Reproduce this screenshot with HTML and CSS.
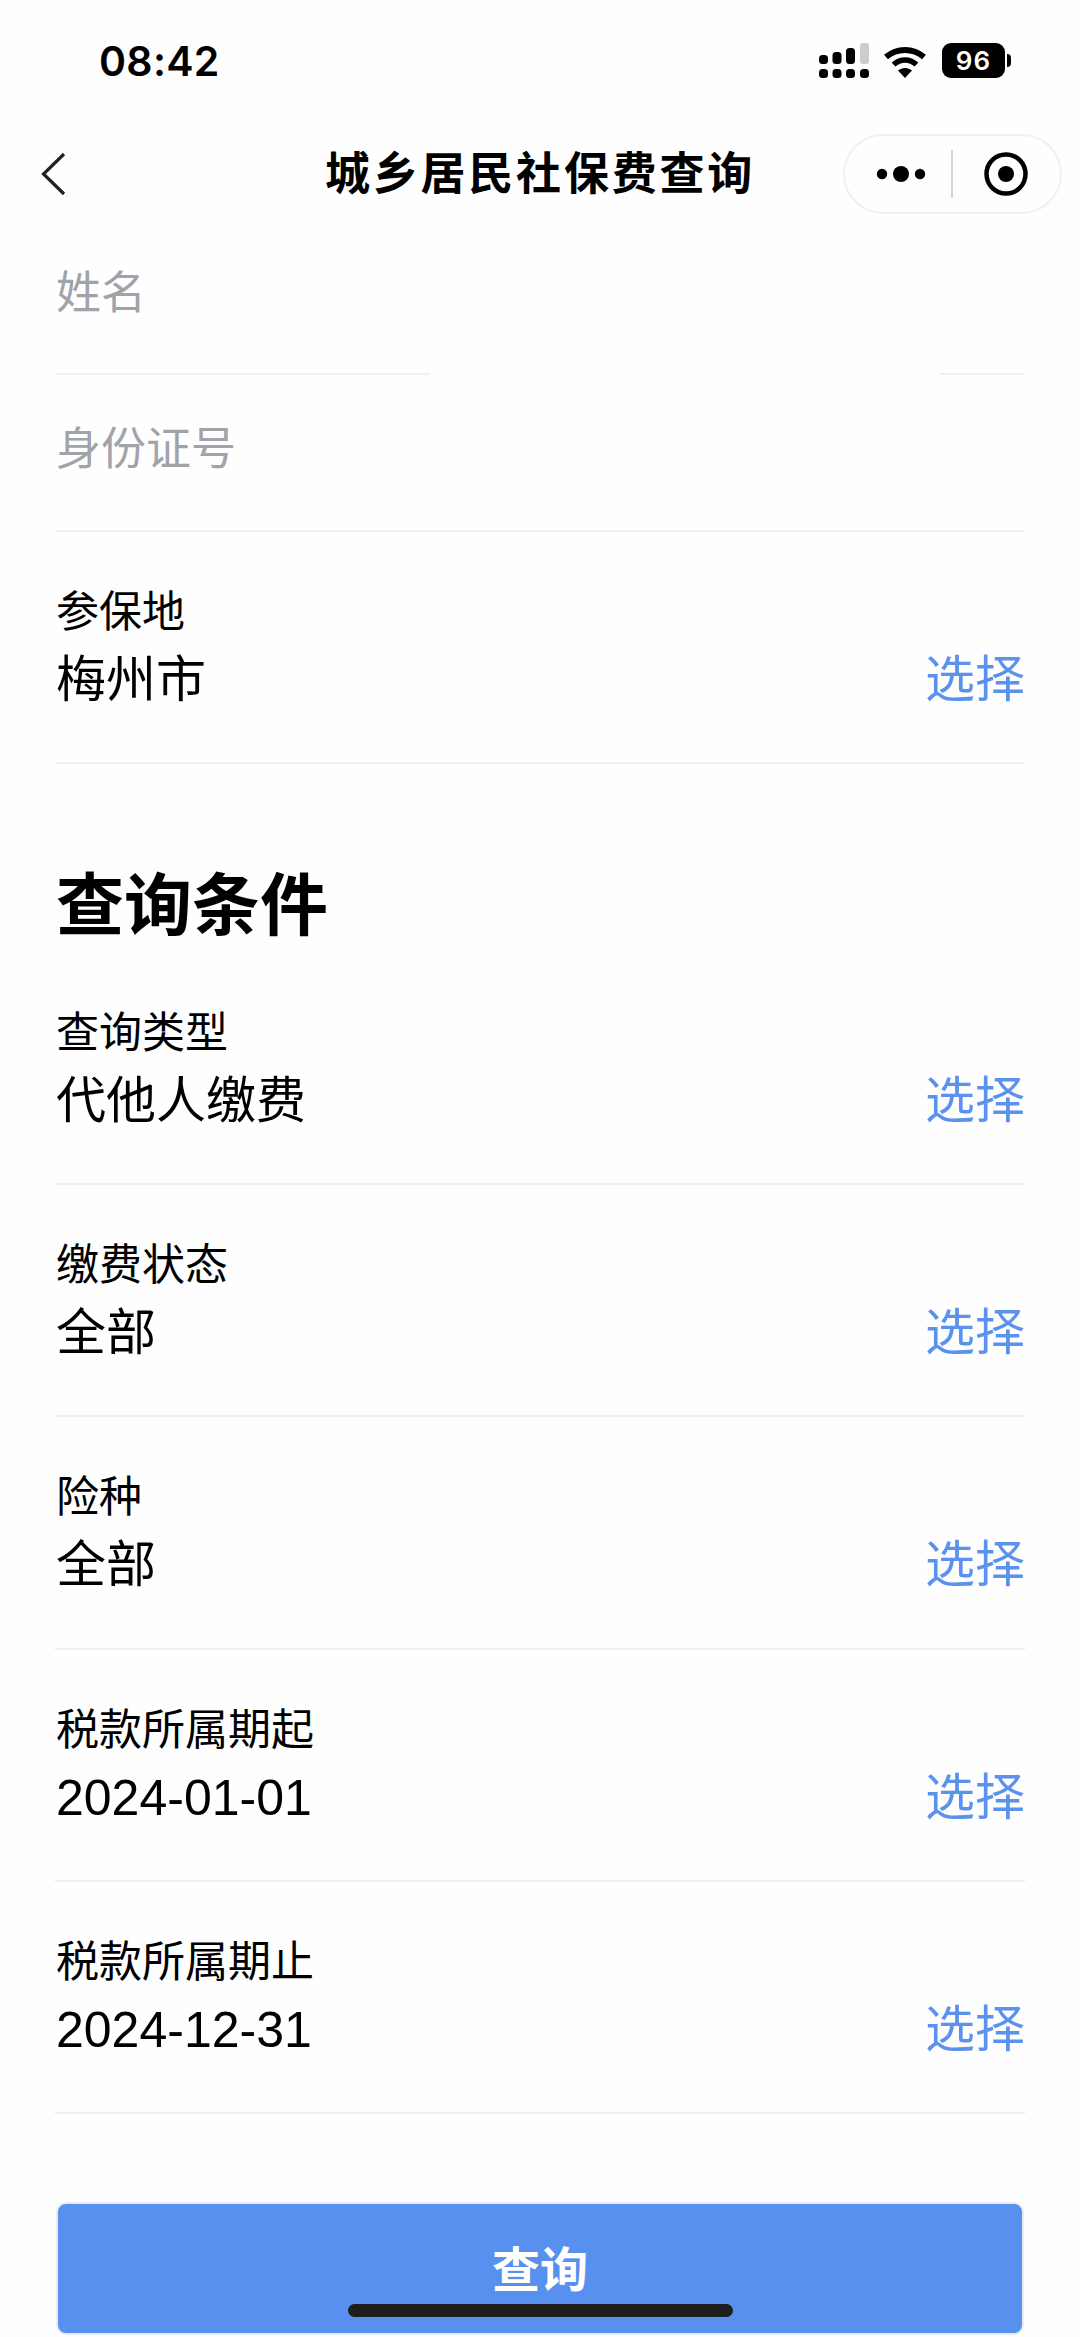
FILE: index.html
```html
<!DOCTYPE html>
<html lang="zh-CN">
<head>
<meta charset="utf-8">
<title>城乡居民社保费查询</title>
<link rel="stylesheet" href="styles.css">
</head>
<body>
<div class="page">
  <header class="status">
    <span class="time">08:42</span>
    <div class="status-icons">
      <svg class="signal" width="50" height="36" viewBox="0 0 50 36">
        <rect x="0" y="12" width="9" height="9" rx="3.5" fill="#000"/>
        <rect x="13.5" y="9" width="9" height="12" rx="3.5" fill="#000"/>
        <rect x="27" y="5" width="9" height="16" rx="3.5" fill="#000"/>
        <rect x="41" y="0" width="9" height="21" rx="3" fill="#ccc"/>
        <rect x="0" y="26" width="9" height="9" rx="3.5" fill="#000"/>
        <rect x="13.5" y="26" width="9" height="9" rx="3.5" fill="#000"/>
        <rect x="27" y="26" width="9" height="9" rx="3.5" fill="#000"/>
        <rect x="41" y="26" width="9" height="9" rx="3.5" fill="#000"/>
      </svg>
      <svg class="wifi" width="44" height="34" viewBox="0 0 44 34">
        <path d="M22 33 15 25.500C19 22 25 22 29 25.500Z" fill="#000"/>
        <path d="M3 12C14 2.500 30 2.500 41 12" fill="none" stroke="#000" stroke-width="6"/>
        <path d="M10.500 19.500C17.500 13.500 26.500 13.500 33.500 19.500" fill="none" stroke="#000" stroke-width="5.500"/>
      </svg>
      <div class="battery"><span class="battery-body">96</span><span class="battery-tip"></span></div>
    </div>
  </header>

  <nav class="nav">
    <svg class="back" width="26" height="44" viewBox="0 0 26 44">
      <path d="M23 2 2.500 22 23 42" fill="none" stroke="#222" stroke-width="3.200"/>
    </svg>
    <h1 class="nav-title">城乡居民社保费查询</h1>
    <div class="capsule">
      <svg width="56" height="20" viewBox="0 0 56 20">
        <circle cx="9" cy="10" r="5.200" fill="#000"/>
        <circle cx="28" cy="10" r="8" fill="#000"/>
        <circle cx="47" cy="10" r="5.200" fill="#000"/>
      </svg>
      <span class="capsule-div"></span>
      <svg width="46" height="46" viewBox="0 0 46 46">
        <circle cx="23" cy="23" r="19.500" fill="none" stroke="#000" stroke-width="4.500"/>
        <circle cx="23" cy="23" r="8" fill="#000"/>
      </svg>
    </div>
  </nav>

  <main class="content">
    <div class="input-row input-first">姓名</div>
    <div class="split-line"><span class="seg-a"></span><span class="seg-b"></span></div>
    <div class="input-row input-second">身份证号</div>
    <div class="line"></div>

    <section class="field field-first">
      <div class="label">参保地</div>
      <div class="value-row"><span class="value">梅州市</span><span class="pick">选择</span></div>
    </section>

    <h2 class="heading">查询条件</h2>

    <section class="field">
      <div class="label">查询类型</div>
      <div class="value-row"><span class="value">代他人缴费</span><span class="pick">选择</span></div>
    </section>
    <section class="field">
      <div class="label">缴费状态</div>
      <div class="value-row"><span class="value">全部</span><span class="pick">选择</span></div>
    </section>
    <section class="field">
      <div class="label">险种</div>
      <div class="value-row"><span class="value">全部</span><span class="pick">选择</span></div>
    </section>
    <section class="field">
      <div class="label">税款所属期起</div>
      <div class="value-row"><span class="value">2024-01-01</span><span class="pick">选择</span></div>
    </section>
    <section class="field">
      <div class="label">税款所属期止</div>
      <div class="value-row"><span class="value">2024-12-31</span><span class="pick">选择</span></div>
    </section>

    <button class="submit">查询</button>
  </main>
  <div class="home-bar"></div>
</div>
</body>
</html>
```
FILE: styles.css
```css
* { box-sizing: border-box; }
html, body { margin: 0; padding: 0; background: #fefefe; }
body { font-family: "Liberation Sans", "Noto Sans CJK SC", sans-serif; color: #000; }
.page { position: relative; width: 1080px; height: 2337px; overflow: hidden; }

.status { height: 88px; display: flex; justify-content: space-between; padding: 0 69px 0 99px; }
.time { font-family: "Inter", "Liberation Sans", sans-serif; font-weight: 600; font-size: 41px; line-height: 44px; margin-top: 39px; letter-spacing: .3px; }
.status-icons { display: flex; align-items: flex-start; padding-top: 43px; }
.wifi { margin: 2px 0 0 14px; }
.battery { display: flex; align-items: center; margin-left: 15px; }
.battery-body { width: 63px; height: 35px; background: #000; border-radius: 9px; color: #fff; font-family: "Inter", "Liberation Sans", sans-serif; font-weight: 600; font-size: 26px; line-height: 35px; text-align: center; letter-spacing: 1px; }
.battery-tip { width: 4px; height: 13px; margin-left: 2px; background: #000; border-radius: 0 6px 6px 0; }

.nav { height: 128px; display: flex; align-items: center; padding: 44px 18px 0 41px; position: relative; }
.back { flex: none; }
.nav-title { position: absolute; left: 0; right: 0; top: 58px; margin: 0; text-align: center; font-size: 45px; line-height: 58px; font-weight: 700; letter-spacing: 2.8px; pointer-events: none; }
.capsule { margin-left: auto; width: 219px; height: 80px; border: 2px solid #f0f0f0; border-radius: 40px; display: flex; align-items: center; padding-left: 28px; }
.capsule-div { width: 2px; height: 48px; background: #d4d4d4; margin: 0 30px 0 22px; }

.content { padding: 0 55px; }
.input-row { font-size: 45px; line-height: 60px; color: #a1a3a9; padding-left: 1px; }
.input-first { height: 157px; padding-top: 48px; }
.input-second { height: 155px; padding-top: 45px; }
.split-line { display: flex; justify-content: space-between; height: 2px; }
.seg-a { width: 375px; background: #f0f0f0; }
.seg-b { width: 85px; background: #f0f0f0; }
.line { height: 2px; background: #f0f0f0; }

.field { height: 232.2px; border-bottom: 2px solid #f0f0f0; padding: 53px 0 0 1px; }
.field-first { height: 232px; }
.label { font-size: 43px; line-height: 54px; }
.value-row { display: flex; justify-content: space-between; align-items: center; margin-top: 8px; height: 66px; font-size: 50px; line-height: 66px; }
.pick { color: #5a92ee; }

.heading { margin: 0; height: 189px; padding: 93px 0 0 1px; font-size: 68px; line-height: 98px; font-weight: 700; }

.submit { display: block; width: 968px; height: 133px; margin: 88px 0 0 1px; background: #5790ee; border: 2px solid #e8ecf2; border-radius: 10px; color: #fff; font-family: inherit; font-size: 48px; font-weight: 700; padding: 6px 0 0; line-height: 60px; }

.home-bar { position: absolute; left: 348px; top: 2304px; width: 385px; height: 13px; background: #1e1e1e; border-radius: 7px; }
```
